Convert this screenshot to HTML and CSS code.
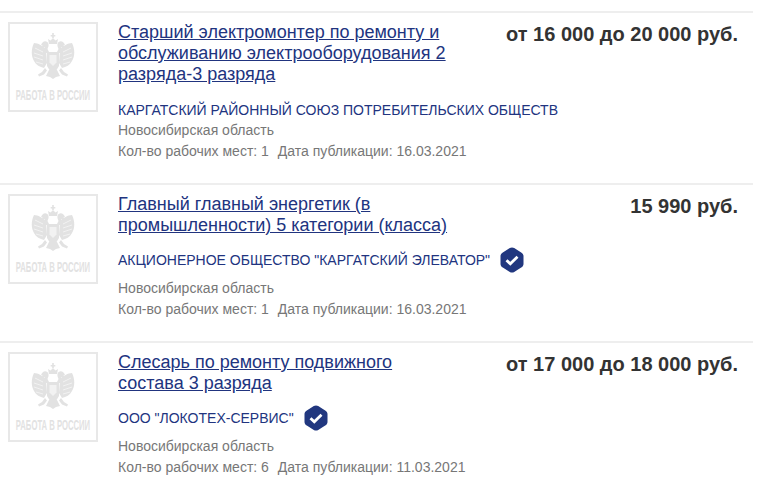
FILE: index.html
```html
<!DOCTYPE html>
<html lang="ru">
<head>
    <meta charset="UTF-8">
    <meta name="viewport" content="width=device-width, initial-scale=1.0">
    <title>Вакансии</title>
    <link rel="stylesheet" href="styles.css">
</head>
<body>
    <svg class="sprite" width="0" height="0">
        <symbol id="eagle" viewBox="0 0 86 60">
            <g class="eagle">
                <path d="M42.200 9h1.600v2h1.500v1.500h-1.500V14h-1.600v-1.500h-1.500V11h1.500z"/>
                <path d="M38 15l2.500 1.500L43 14l2.500 2.500L48 15l-1 5H39z"/>
                <path d="M33 18c2-1.500 5-.5 5.500 2 .4 2-.5 3.500-1 5l2 4h-4l-1-6-3 .5 1-2-1.500-1z"/>
                <path d="M53 18c-2-1.500-5-.5-5.500 2-.4 2 .5 3.500 1 5l-2 4h4l1-6 3 .5-1-2 1.500-1z"/>
                <path d="M36 25c-3-3-8-6-12-6-3 6-3 13 0 18 2 4 6 6 10 7l3-5z"/>
                <path d="M50 25c3-3 8-6 12-6 3 6 3 13 0 18-2 4-6 6-10 7l-3-5z"/>
                <path d="M37 28h12v14l-2.500 4h-7L37 42z"/>
                <path d="M39 46h8l3 6-4 1-3 2-3-2-4-1z"/>
                <path d="M35 44l-3 4-4 2.500 1 2 5-2 3-4zM51 44l3 4 4 2.500-1 2-5-2-3-4z"/>
            </g>
            <path class="feathers" d="M25 24l8 4M24 29l9 3M24 33l9 3M26 38l7 2M61 24l-8 4M62 29l-9 3M62 33l-9 3M60 38l-7 2"/>
            <path class="shield" d="M39.500 31h7v7.500L43 42l-3.500-3.500z"/>
        </symbol>
        <symbol id="check" viewBox="0 0 26 26">
            <path class="check-bg" d="M13 .5c.8 0 1.500.2 2.200.6l7 4.300c1.400.8 2.300 2.200 2.300 3.700v7.800c0 1.500-.9 2.900-2.300 3.700l-7 4.300c-1.400.8-3 .8-4.400 0l-7-4.300C2.400 19.800 1.500 18.400 1.500 16.900V9.100c0-1.500.9-2.900 2.300-3.700l7-4.300c.7-.4 1.400-.6 2.200-.6z"/>
            <path class="check-mark" d="M7.500 13.200l3.800 3.600 7.200-7"/>
        </symbol>
    </svg>

    <div class="job-list">
        <div class="job">
            <svg class="job-logo" viewBox="0 0 86 86">
                <use href="#eagle" width="86" height="60"/>
                <text class="logo-text" transform="translate(43 76) scale(.55 1)" text-anchor="middle">РАБОТА В РОССИИ</text>
            </svg>
            <div class="job-info">
                <a class="job-title" href="#">Старший электромонтер по ремонту и обслуживанию электрооборудования 2 разряда-3 разряда</a>
                <div class="company">
                    <span>КАРГАТСКИЙ РАЙОННЫЙ СОЮЗ ПОТРЕБИТЕЛЬСКИХ ОБЩЕСТВ</span>
                </div>
                <div class="job-text">Новосибирская область</div>
                <div class="job-text">Кол-во рабочих мест: 1 <span class="job-date">Дата публикации: 16.03.2021</span></div>
            </div>
            <div class="job-price">от 16 000 до 20 000 руб.</div>
        </div>

        <div class="job job-short">
            <svg class="job-logo" viewBox="0 0 86 86">
                <use href="#eagle" width="86" height="60"/>
                <text class="logo-text" transform="translate(43 76) scale(.55 1)" text-anchor="middle">РАБОТА В РОССИИ</text>
            </svg>
            <div class="job-info">
                <a class="job-title" href="#">Главный главный энергетик (в промышленности) 5 категории (класса)</a>
                <div class="company company-verified">
                    <span>АКЦИОНЕРНОЕ ОБЩЕСТВО "КАРГАТСКИЙ ЭЛЕВАТОР"</span>
                    <svg class="company-check"><use href="#check"/></svg>
                </div>
                <div class="job-text">Новосибирская область</div>
                <div class="job-text">Кол-во рабочих мест: 1 <span class="job-date">Дата публикации: 16.03.2021</span></div>
            </div>
            <div class="job-price">15 990 руб.</div>
        </div>

        <div class="job job-short">
            <svg class="job-logo" viewBox="0 0 86 86">
                <use href="#eagle" width="86" height="60"/>
                <text class="logo-text" transform="translate(43 76) scale(.55 1)" text-anchor="middle">РАБОТА В РОССИИ</text>
            </svg>
            <div class="job-info">
                <a class="job-title" href="#">Слесарь по ремонту подвижного состава 3 разряда</a>
                <div class="company company-verified">
                    <span>ООО "ЛОКОТЕХ-СЕРВИС"</span>
                    <svg class="company-check"><use href="#check"/></svg>
                </div>
                <div class="job-text">Новосибирская область</div>
                <div class="job-text">Кол-во рабочих мест: 6 <span class="job-date">Дата публикации: 11.03.2021</span></div>
            </div>
            <div class="job-price">от 17 000 до 18 000 руб.</div>
        </div>
    </div>
</body>
</html>
```

FILE: styles.css
```css
body {
    margin: 0;
    background: #fff;
    font-family: "Liberation Sans", Arial, sans-serif;
}

.sprite {
    display: block;
}

.job-list {
    width: 753px;
    margin-top: 11px;
}

.job {
    display: flex;
    height: 161px;
    padding: 9px 15px 0 8px;
    border-top: 2px solid #eee;
}

.job-short {
    height: 147px;
}

.job-logo {
    flex: none;
    width: 90px;
    height: 90px;
    box-sizing: border-box;
    border: 2px solid #e8e8e8;
}

.eagle {
    fill: #e2e2e2;
}

.feathers {
    fill: none;
    stroke: #f2f2f2;
    stroke-width: 1;
}

.shield {
    fill: #f2f2f2;
}

.logo-text {
    fill: #e2e2e2;
    font-size: 14px;
    font-weight: bold;
}

.job-info {
    width: 340px;
    margin-left: 20px;
}

.job-title {
    display: block;
    font-size: 18px;
    line-height: 21px;
    color: #21347f;
}

.company {
    display: flex;
    align-items: center;
    gap: 9px;
    margin-top: 15px;
    font-size: 14px;
    line-height: 20px;
    color: #21347f;
    white-space: nowrap;
}

.company-verified {
    height: 26px;
    margin: 11px 0 5px;
}

.company-check {
    flex: none;
    width: 26px;
    height: 26px;
}

.check-bg {
    fill: #21377f;
}

.check-mark {
    fill: none;
    stroke: #fff;
    stroke-width: 2.800;
}

.job-text {
    font-size: 14px;
    line-height: 21px;
    color: #777;
    white-space: nowrap;
}

.job-date {
    margin-left: 5px;
}

.job-price {
    flex: 1;
    font-size: 20px;
    font-weight: bold;
    line-height: 24px;
    color: #333;
    text-align: right;
    white-space: nowrap;
}
```
